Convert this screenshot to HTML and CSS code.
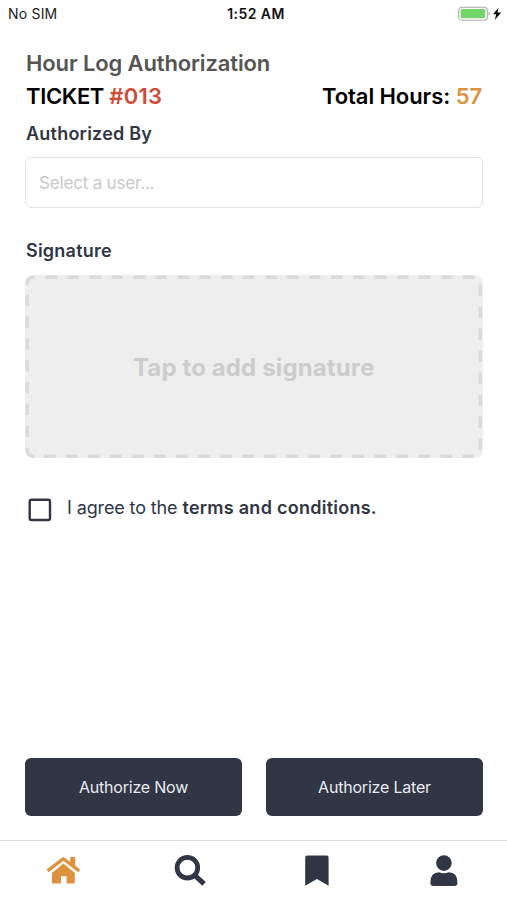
FILE: index.html
```html
<!DOCTYPE html>
<html lang="en">
<head>
<meta charset="utf-8">
<title>Hour Log Authorization</title>
<link rel="stylesheet" href="styles.css">
</head>
<body>
<div class="app">
  <header class="status">
    <span class="carrier">No SIM</span>
    <span class="clock">1:52 AM</span>
    <svg class="battery" width="44" height="16" viewBox="0 0 44 16">
      <rect x=".7" y="1.2" width="28.6" height="13" rx="3.4" fill="#fff" stroke="#aaa" stroke-width="1.1"/>
      <rect x="2.7" y="3.1" width="24.4" height="9.2" rx="1.2" fill="#72d66b"/>
      <path d="M30.5 5.8q1.4.6 1.4 2t-1.4 2z" fill="#aaa"/>
      <path d="M40.6 1.700 35 8.300h3.200l-1.400 5.700 6.300-7.500h-3.600z" fill="#000"/>
    </svg>
  </header>
  <main class="content">
    <h1 class="title">Hour Log Authorization</h1>
    <div class="summary">
      <div class="ticket">TICKET <span class="red">#013</span></div>
      <div class="hours">Total Hours: <span class="orange">57</span></div>
    </div>
    <h2 class="label label-user">Authorized By</h2>
    <div class="field">Select a user...</div>
    <h2 class="label label-sign">Signature</h2>
    <div class="signature">
      <svg class="dashes" width="457" height="183" viewBox="0 0 457 183" fill="none" stroke="#dadada" stroke-width="3.4">
        <path d="M2.200 9.500V8.500Q2.200 2.200 9.500 2.200"/>
        <path d="M20.500 2.200H450" stroke-dasharray="11.500 10.470"/>
        <path d="M455.300 9.500V175" stroke-dasharray="11.500 10.500"/>
        <path d="M2.200 19.500V162" stroke-dasharray="11.500 10.350"/>
        <path d="M2.200 173v1.500q0 6.700 7 6.700"/>
        <path d="M19 181.200H450" stroke-dasharray="11.500 10.530"/>
      </svg>
      <span class="prompt">Tap to add signature</span>
    </div>
    <div class="agree">
      <svg class="checkbox" width="24" height="24" viewBox="0 0 24 24"><rect x="1.700" y="1.700" width="20.300" height="20.300" rx="1.800" fill="none" stroke="currentColor" stroke-width="2.400"/></svg>
      <span class="terms">I agree to the <b>terms and conditions.</b></span>
    </div>
    <div class="actions">
      <button class="button now">Authorize Now</button>
      <button class="button later">Authorize Later</button>
    </div>
  </main>
  <nav class="tabs">
    <a class="tab active"><svg width="36" height="32" viewBox="0 0 36 32" fill="currentColor">
      <path d="M7 18 18.400 8.400 29.800 18v9.400q0 1-1 1h-7.200v-7.200h-5.600v7.200H8q-1 0-1-1z"/>
      <path d="M2.600 15.900 18.400 3.700l15.800 12.200" fill="none" stroke="currentColor" stroke-width="3.300" stroke-linejoin="round"/>
      <path d="M25.200 2H30.200V13l-5-3.900z"/>
    </svg></a>
    <a class="tab"><svg width="36" height="32" viewBox="0 0 36 32" fill="none" stroke="currentColor">
      <circle cx="15.400" cy="12.700" r="10.300" stroke-width="4.800"/>
      <path d="m22.800 20.300 9.300 8.500" stroke-width="5"/>
    </svg></a>
    <a class="tab"><svg width="36" height="32" viewBox="0 0 36 32" fill="currentColor">
      <path d="M6.200 30.800V2.400q0-2 2-2h19.400q2 0 2 2v28.400l-11.700-6.700z"/>
    </svg></a>
    <a class="tab"><svg width="36" height="32" viewBox="0 0 36 32" fill="currentColor">
      <circle cx="17.900" cy="8.100" r="7.800"/>
      <path d="M4.400 27.500q0-10.200 8.600-10.200 4.900 2 9.800 0 8.600 0 8.600 10.200v.6q0 2.900-3 2.900h-21q-3 0-3-2.900z"/>
    </svg></a>
  </nav>
</div>
</body>
</html>
```
FILE: styles.css
```css
* { box-sizing: border-box; }
body { margin: 0; background: #fff; color: #303644; font-family: Inter, sans-serif; }
.app { display: flex; flex-direction: column; width: 507px; height: 900px; overflow: hidden; }
.status { display: grid; grid-template-columns: 1fr auto 1fr; align-items: center; height: 28px; padding: 0 5px 0 8px; color: #222; font-size: 14px; }
.carrier { padding-bottom: 1px; letter-spacing: .2px; }
.clock { padding: 0 0 1px 2px; color: #111; font-weight: 600; letter-spacing: .45px; }
.battery { justify-self: end; }
.content { display: flex; flex: 1; flex-direction: column; padding: 19px 24px 24px 25px; }
.title { margin: 0; padding-left: 1px; color: #555; font-size: 22px; font-weight: 600; letter-spacing: -.13px; line-height: 33px; white-space: nowrap; }
.summary { display: flex; justify-content: space-between; padding: 0 1px; color: #000; font-size: 22px; font-weight: 600; letter-spacing: -.08px; line-height: 33px; white-space: nowrap; }
.ticket { letter-spacing: -.35px; }
.red { color: #cf4d38; letter-spacing: .3px; }
.orange { color: #df923d; }
.label { margin: 0; padding-left: 1px; font-size: 18px; font-weight: 600; letter-spacing: .22px; line-height: 24px; }
.label-user { margin-top: 9px; }
.field { height: 51px; margin-top: 11px; padding-left: 13px; border: 1.5px solid #e3e3e3; border-radius: 6px; color: #c9c9c9; font-size: 17px; letter-spacing: -.18px; line-height: 51px; }
.label-sign { margin-top: 31px; }
.signature { position: relative; display: flex; flex: none; align-items: center; justify-content: center; width: 457.500px; height: 183px; margin-top: 12px; border-radius: 8px; background: #eee; }
.dashes { position: absolute; inset: 0; }
.prompt { padding-top: 1px; color: #ccc; font-size: 24px; font-weight: 700; letter-spacing: .13px; }
.agree { display: flex; align-items: center; height: 30px; margin-top: 35px; padding-left: 3px; }
.checkbox { margin: 4px 15px 0 0; }
.terms { font-size: 18px; letter-spacing: -.12px; line-height: 26px; white-space: nowrap; }
.terms b { font-weight: 600; letter-spacing: .26px; }
.actions { display: grid; grid-template-columns: 217px 217px; gap: 24px; margin-top: auto; }
.button { height: 58px; padding: 0; border: 0; border-radius: 6px; background: #303644; color: #e9eaf0; font: 400 16px Inter, sans-serif; letter-spacing: -.2px; }
.tabs { display: grid; grid-template-columns: repeat(4, 1fr); height: 60px; padding-top: 14px; border-top: 1px solid #dcdcdc; }
.tab { display: flex; justify-content: center; align-items: flex-start; }
.active { color: #df923d; }
```
